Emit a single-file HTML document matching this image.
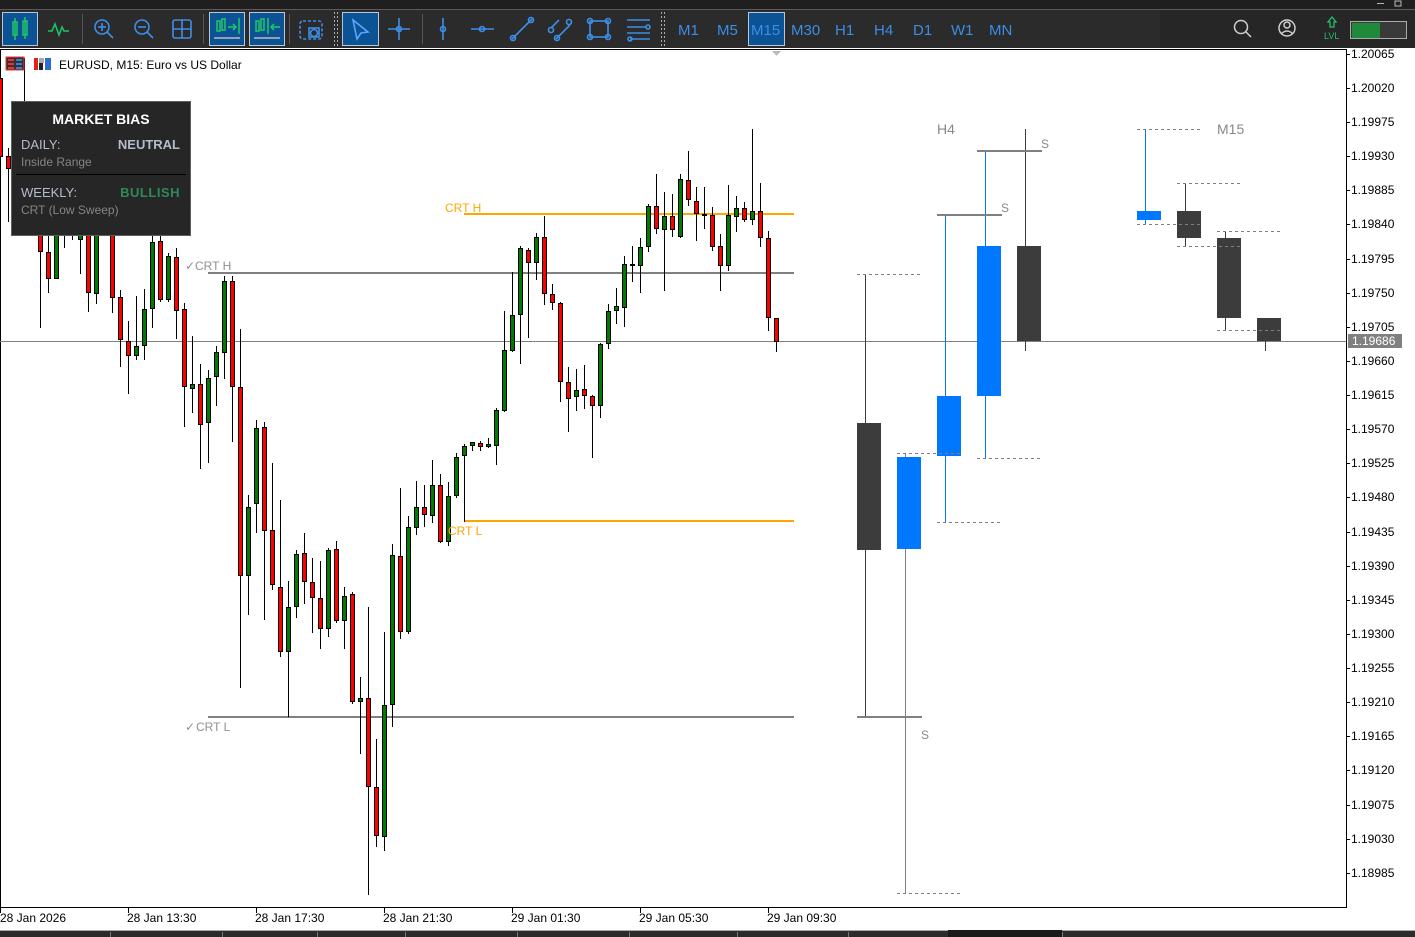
<!DOCTYPE html>
<html><head><meta charset="utf-8"><style>
*{margin:0;padding:0}
body{width:1415px;height:937px;overflow:hidden;background:#fff;font-family:"Liberation Sans",sans-serif;position:relative}
svg{position:absolute;left:0;top:0}
.tf{position:absolute;top:22px;font-size:15px;color:#3b8de8}
</style></head><body>
<svg width="1415" height="937" shape-rendering="crispEdges" font-family="Liberation Sans, sans-serif">
<rect x="0" y="0" width="1415" height="9" fill="#1f1f1f"/>
<rect x="0" y="9" width="1415" height="1" fill="#5a5a5a"/>
<rect x="0" y="10" width="1415" height="38" fill="#2b2b2b"/>
<rect x="1160" y="10" width="255" height="38" fill="#262626"/>
<g fill="#bbb"><rect x="1377" y="3" width="7" height="1"/><rect x="1395" y="1" width="6" height="5" fill="none" stroke="#bbb"/></g>
<g fill="#0b5394" stroke="#b8c7d8">
<rect x="2.5" y="12.5" width="35" height="33"/>
<rect x="209.5" y="12.5" width="35" height="33"/>
<rect x="249.5" y="12.5" width="35" height="33"/>
<rect x="342.5" y="12.5" width="36" height="33"/>
<rect x="748.5" y="12.5" width="36" height="33"/>
</g>
<g fill="#555"><rect x="82" y="14" width="1" height="30"/><rect x="203" y="14" width="1" height="30"/><rect x="289" y="14" width="1" height="30"/><rect x="422" y="14" width="1" height="30"/></g>
<g stroke="#aaa" stroke-dasharray="2,2"><line x1="334.5" y1="12" x2="334.5" y2="46"/><line x1="337.5" y1="12" x2="337.5" y2="46"/><line x1="661.5" y1="12" x2="661.5" y2="46"/><line x1="664.5" y1="12" x2="664.5" y2="46"/></g>
<g shape-rendering="auto" fill="none" stroke-width="1.6">
<g stroke="#1fc06a"><rect x="13" y="22" width="4" height="13"/><line x1="15" y1="18" x2="15" y2="40"/><rect x="23" y="21" width="4" height="14"/><line x1="25" y1="17" x2="25" y2="39"/></g>
<polyline stroke="#1fc06a" points="48,31 52,31 55,24 59,35 62,27 64,31 69,31"/>
<g stroke="#3d8ee8"><circle cx="102" cy="27" r="7"/><line x1="107" y1="32" x2="113" y2="38"/><line x1="98" y1="27" x2="106" y2="27"/><line x1="102" y1="23" x2="102" y2="31"/>
<circle cx="142" cy="27" r="7"/><line x1="147" y1="32" x2="153" y2="38"/><line x1="138" y1="27" x2="146" y2="27"/>
<rect x="173" y="20" width="18" height="18" rx="2"/><line x1="182" y1="20" x2="182" y2="38"/><line x1="173" y1="29" x2="191" y2="29"/>
<rect x="300" y="21" width="22" height="18" rx="3" stroke-dasharray="3,2"/><circle cx="314" cy="33" r="3.5"/><rect x="309" y="28" width="10" height="9"/>
<path d="M353 20 L368 32 L361 33 L357 39 Z" stroke="#5aa7ff"/>
<line x1="399" y1="18" x2="399" y2="40"/><line x1="388" y1="29" x2="410" y2="29"/><circle cx="399" cy="29" r="2.5"/>
<line x1="443" y1="18" x2="443" y2="40"/><circle cx="443" cy="29" r="2.5"/>
<line x1="471" y1="29" x2="494" y2="29"/><circle cx="482" cy="29" r="2.5"/>
<line x1="512" y1="39" x2="532" y2="19"/><circle cx="513" cy="38" r="2.5"/><circle cx="531" cy="20" r="2.5"/>
<line x1="551" y1="28" x2="559" y2="20"/><line x1="556" y1="39" x2="570" y2="25"/><circle cx="551" cy="30" r="2.5"/><circle cx="569" cy="22" r="2.5"/><circle cx="557" cy="38" r="2.5"/>
<rect x="590" y="21" width="18" height="16"/><circle cx="590" cy="21" r="2.5"/><circle cx="608" cy="21" r="2.5"/><circle cx="590" cy="37" r="2.5"/><circle cx="608" cy="37" r="2.5"/>
<line x1="627" y1="20" x2="650" y2="20"/><line x1="627" y1="27" x2="646" y2="27"/><line x1="627" y1="33" x2="650" y2="33"/><line x1="630" y1="39" x2="650" y2="39"/><circle cx="648" cy="27" r="2"/><circle cx="630" cy="39" r="2"/>
</g>
<g stroke="#1fc06a"><rect x="217" y="21" width="3" height="10"/><rect x="222" y="19" width="3" height="11"/><line x1="228" y1="27" x2="236" y2="27"/><path d="M233 24 L236 27 L233 30"/><line x1="239" y1="18" x2="239" y2="34"/><line x1="214" y1="38" x2="240" y2="38" stroke="#bbb"/>
<rect x="256" y="21" width="3" height="10"/><rect x="261" y="19" width="3" height="11"/><line x1="268" y1="18" x2="268" y2="34"/><line x1="271" y1="27" x2="280" y2="27"/><path d="M274 24 L271 27 L274 30"/><line x1="254" y1="38" x2="280" y2="38" stroke="#bbb"/></g>
<g stroke="#d0d0d0" stroke-width="1.5"><circle cx="1241" cy="27" r="6.5"/><line x1="1246" y1="32" x2="1251" y2="37"/><circle cx="1287" cy="28" r="8"/><circle cx="1287" cy="25" r="3"/><path d="M1281 34 Q1287 28 1293 34"/></g>
<path d="M1332 17 L1336 22 L1334 22 L1334 27 L1330 27 L1330 22 L1328 22 Z" stroke="#22c070" stroke-width="1.3"/>
</g>
<text x="1324" y="39" font-size="9" fill="#22c070">LVL</text>
<rect x="1350.5" y="21.5" width="56" height="17" fill="#3a3a3a" stroke="#aaa"/>
<rect x="1352" y="23" width="28" height="15" fill="#1e8a3a"/>
<rect x="0" y="48" width="1415" height="1" fill="#fff"/>
<rect x="0" y="49" width="1347" height="1" fill="#000"/>
<rect x="0" y="49" width="1" height="859" fill="#000"/>
<rect x="1346" y="49" width="1" height="859" fill="#000"/>
<rect x="0" y="907" width="1347" height="1" fill="#000"/>
<path d="M772 51 L781 51 L776.5 56 Z" fill="#bbb"/>
<rect x="0" y="341" width="1346" height="1" fill="#808080"/>
<rect x="208" y="272" width="586" height="2" fill="#808080"/>
<rect x="208" y="716" width="586" height="2" fill="#808080"/>
<rect x="464" y="213" width="330" height="2" fill="#FFA500"/>
<rect x="464" y="520" width="330" height="2" fill="#FFA500"/>
<g stroke="#000" shape-rendering="crispEdges">
<path stroke-width="1" d="
M0.5 50V160 M8.5 148V222 M24.5 58V230 M40.5 200V328 M48.5 220V293 M56.5 230V279 M64.5 190V248 M72.5 200V240 M80.5 200V274 M88.5 200V312 M96.5 200V304 M104.5 190V230 M112.5 200V313 M120.5 290V367 M128.5 321V394 M136.5 296V360 M144.5 289V360 M152.5 230V328 M160.5 236V302 M168.5 253V302 M176.5 248V339 M184.5 303V427 M192.5 336V413 M200.5 364V469 M208.5 370V463 M216.5 346V406 M224.5 276V379 M232.5 276V442 M240.5 329V688 M248.5 495V615 M256.5 420V533 M264.5 422V620 M272.5 463V590 M280.5 500V657 M288.5 581V717 M296.5 550V618 M304.5 533V604 M312.5 558V633 M320.5 561V649 M328.5 548V637 M336.5 541V623 M344.5 587V649 M352.5 592V704 M360.5 677V754 M368.5 607V895 M376.5 739V847 M384.5 632V851 M392.5 544V727 M400.5 488V639 M408.5 516V634 M416.5 481V535 M424.5 485V527 M432.5 460V523 M440.5 474V543 M448.5 482V546 M456.5 453V498 M464.5 444V522 M472.5 442V451 M480.5 441V451 M488.5 438V448 M496.5 408V465 M504.5 311V412 M512.5 272V352 M520.5 246V364 M528.5 248V338 M536.5 233V280 M544.5 216V305 M552.5 284V310 M560.5 302V402 M568.5 367V432 M576.5 369V411 M584.5 365V409 M592.5 395V458 M600.5 343V418 M608.5 304V349 M616.5 288V324 M624.5 256V327 M632.5 246V282 M640.5 238V293 M648.5 204V252 M656.5 174V234 M664.5 192V291 M672.5 194V237 M680.5 174V238 M688.5 151V206 M696.5 187V241 M704.5 187V229 M712.5 207V251 M720.5 234V291 M728.5 185V271 M736.5 196V232 M744.5 202V222 M752.5 129V225 M760.5 183V247 M768.5 231V331 M776.5 318V352"/>
</g>
<g stroke="#000" fill="#ff0000">
<rect x="-1.5" y="78.5" width="4" height="78"/>
<rect x="6.5" y="156.5" width="4" height="12"/>
<rect x="38.5" y="205.5" width="4" height="46"/>
<rect x="46.5" y="252.5" width="4" height="26"/>
<rect x="70.5" y="205.5" width="4" height="24"/>
<rect x="86.5" y="210.5" width="4" height="82"/>
<rect x="102.5" y="200.5" width="4" height="24"/>
<rect x="110.5" y="210.5" width="4" height="87"/>
<rect x="118.5" y="297.5" width="4" height="42"/>
<rect x="126.5" y="341.5" width="4" height="14"/>
<rect x="158.5" y="241.5" width="4" height="58"/>
<rect x="174.5" y="257.5" width="4" height="53"/>
<rect x="182.5" y="309.5" width="4" height="77"/>
<rect x="198.5" y="384.5" width="4" height="40"/>
<rect x="230.5" y="281.5" width="4" height="105"/>
<rect x="238.5" y="387.5" width="4" height="188"/>
<rect x="262.5" y="427.5" width="4" height="103"/>
<rect x="270.5" y="530.5" width="4" height="54"/>
<rect x="278.5" y="587.5" width="4" height="64"/>
<rect x="302.5" y="553.5" width="4" height="28"/>
<rect x="310.5" y="582.5" width="4" height="15"/>
<rect x="318.5" y="598.5" width="4" height="30"/>
<rect x="334.5" y="549.5" width="4" height="71"/>
<rect x="350.5" y="594.5" width="4" height="107"/>
<rect x="366.5" y="698.5" width="4" height="88"/>
<rect x="374.5" y="787.5" width="4" height="48"/>
<rect x="398.5" y="556.5" width="4" height="75"/>
<rect x="422.5" y="507.5" width="4" height="7"/>
<rect x="438.5" y="485.5" width="4" height="56"/>
<rect x="478.5" y="443.5" width="4" height="3"/>
<rect x="526.5" y="250.5" width="4" height="12"/>
<rect x="542.5" y="237.5" width="4" height="56"/>
<rect x="550.5" y="294.5" width="4" height="8"/>
<rect x="558.5" y="303.5" width="4" height="78"/>
<rect x="566.5" y="382.5" width="4" height="16"/>
<rect x="582.5" y="389.5" width="4" height="6"/>
<rect x="590.5" y="396.5" width="4" height="9"/>
<rect x="654.5" y="206.5" width="4" height="22"/>
<rect x="670.5" y="216.5" width="4" height="13"/>
<rect x="686.5" y="180.5" width="4" height="19"/>
<rect x="694.5" y="201.5" width="4" height="12"/>
<rect x="710.5" y="215.5" width="4" height="31"/>
<rect x="718.5" y="246.5" width="4" height="19"/>
<rect x="742.5" y="208.5" width="4" height="11"/>
<rect x="758.5" y="211.5" width="4" height="26"/>
<rect x="766.5" y="238.5" width="4" height="79"/>
<rect x="774.5" y="318.5" width="4" height="23"/>
</g>
<g stroke="#000" fill="#007a00">
<rect x="22.5" y="120.5" width="4" height="79"/>
<rect x="54.5" y="205.5" width="4" height="73"/>
<rect x="62.5" y="200.5" width="4" height="24"/>
<rect x="78.5" y="210.5" width="4" height="29"/>
<rect x="94.5" y="210.5" width="4" height="83"/>
<rect x="134.5" y="346.5" width="4" height="9"/>
<rect x="142.5" y="309.5" width="4" height="36"/>
<rect x="150.5" y="242.5" width="4" height="66"/>
<rect x="166.5" y="256.5" width="4" height="43"/>
<rect x="190.5" y="384.5" width="4" height="4"/>
<rect x="206.5" y="378.5" width="4" height="44"/>
<rect x="214.5" y="352.5" width="4" height="24"/>
<rect x="222.5" y="281.5" width="4" height="71"/>
<rect x="246.5" y="507.5" width="4" height="68"/>
<rect x="254.5" y="428.5" width="4" height="75"/>
<rect x="286.5" y="607.5" width="4" height="44"/>
<rect x="294.5" y="554.5" width="4" height="52"/>
<rect x="326.5" y="550.5" width="4" height="78"/>
<rect x="342.5" y="596.5" width="4" height="24"/>
<rect x="358.5" y="698.5" width="4" height="3"/>
<rect x="382.5" y="705.5" width="4" height="131"/>
<rect x="390.5" y="555.5" width="4" height="149"/>
<rect x="406.5" y="527.5" width="4" height="104"/>
<rect x="414.5" y="507.5" width="4" height="20"/>
<rect x="430.5" y="485.5" width="4" height="30"/>
<rect x="446.5" y="496.5" width="4" height="45"/>
<rect x="454.5" y="457.5" width="4" height="38"/>
<rect x="462.5" y="446.5" width="4" height="9"/>
<rect x="470.5" y="442.5" width="4" height="3"/>
<rect x="486.5" y="444.5" width="4" height="2"/>
<rect x="494.5" y="410.5" width="4" height="35"/>
<rect x="502.5" y="350.5" width="4" height="60"/>
<rect x="510.5" y="315.5" width="4" height="35"/>
<rect x="518.5" y="248.5" width="4" height="66"/>
<rect x="534.5" y="237.5" width="4" height="25"/>
<rect x="574.5" y="390.5" width="4" height="6"/>
<rect x="598.5" y="344.5" width="4" height="61"/>
<rect x="606.5" y="311.5" width="4" height="32"/>
<rect x="614.5" y="306.5" width="4" height="4"/>
<rect x="622.5" y="264.5" width="4" height="43"/>
<rect x="630.5" y="264.5" width="4" height="1"/>
<rect x="638.5" y="247.5" width="4" height="18"/>
<rect x="646.5" y="206.5" width="4" height="40"/>
<rect x="662.5" y="216.5" width="4" height="13"/>
<rect x="678.5" y="179.5" width="4" height="57"/>
<rect x="702.5" y="214.5" width="4" height="1"/>
<rect x="726.5" y="215.5" width="4" height="50"/>
<rect x="734.5" y="208.5" width="4" height="8"/>
<rect x="750.5" y="211.5" width="4" height="8"/>
</g>
<g font-size="12">
<text x="185" y="270" fill="#909090">✓</text><text x="195" y="270" fill="#909090">CRT H</text>
<text x="185" y="731" fill="#909090">✓</text><text x="196" y="731" fill="#909090">CRT L</text>
<text x="445" y="212" fill="#FFA500">CRT H</text>
<text x="448" y="535" fill="#FFA500">CRT L</text>
</g>
<g fill="#3c3c3c" stroke="none">
<rect x="865" y="274" width="1" height="443"/><rect x="857" y="423" width="24" height="127"/>
<rect x="1025" y="129" width="1" height="222"/><rect x="1017" y="246" width="24" height="95"/>
<rect x="1185" y="183" width="1" height="63"/><rect x="1177" y="211" width="24" height="27"/>
<rect x="1225" y="231" width="1" height="99"/><rect x="1217" y="238" width="24" height="80"/>
<rect x="1265" y="318" width="1" height="33"/><rect x="1257" y="318" width="24" height="23"/>
</g>
<g fill="#0077ff" stroke="none">
<rect x="905" y="453" width="1" height="440" fill="#808080"/><rect x="897" y="457" width="24" height="92"/>
<rect x="945" y="215" width="1" height="307"/><rect x="937" y="396" width="24" height="60"/>
<rect x="985" y="151" width="1" height="307"/><rect x="977" y="246" width="24" height="150"/>
<rect x="1145" y="129" width="1" height="95"/><rect x="1137" y="211" width="24" height="9"/>
</g>
<g fill="#808080"><rect x="857" y="716" width="65" height="2"/><rect x="937" y="214" width="65" height="2"/><rect x="977" y="150" width="65" height="2"/></g>
<g stroke="#808080" stroke-dasharray="3,3">
<line x1="857" y1="274.5" x2="920" y2="274.5"/><line x1="897" y1="453.5" x2="960" y2="453.5"/><line x1="897" y1="893.5" x2="960" y2="893.5"/>
<line x1="937" y1="522.5" x2="1000" y2="522.5"/><line x1="977" y1="458.5" x2="1040" y2="458.5"/>
<line x1="1137" y1="129.5" x2="1200" y2="129.5"/><line x1="1137" y1="224.5" x2="1200" y2="224.5"/>
<line x1="1177" y1="183.5" x2="1240" y2="183.5"/><line x1="1177" y1="246.5" x2="1240" y2="246.5"/>
<line x1="1217" y1="231.5" x2="1280" y2="231.5"/><line x1="1217" y1="330.5" x2="1280" y2="330.5"/>
</g>
<g font-size="14" fill="#888"><text x="937" y="134">H4</text><text x="1217" y="134">M15</text></g>
<g font-size="12" fill="#888"><text x="1041" y="148">S</text><text x="1001" y="212">S</text><text x="921" y="739">S</text></g>
<g font-size="12" fill="#000">
<text x="1351" y="58">1.20065</text><text x="1351" y="92">1.20020</text><text x="1351" y="126">1.19975</text><text x="1351" y="160">1.19930</text><text x="1351" y="194">1.19885</text><text x="1351" y="228">1.19840</text><text x="1351" y="263">1.19795</text><text x="1351" y="297">1.19750</text><text x="1351" y="331">1.19705</text><text x="1351" y="365">1.19660</text><text x="1351" y="399">1.19615</text><text x="1351" y="433">1.19570</text><text x="1351" y="467">1.19525</text><text x="1351" y="501">1.19480</text><text x="1351" y="536">1.19435</text><text x="1351" y="570">1.19390</text><text x="1351" y="604">1.19345</text><text x="1351" y="638">1.19300</text><text x="1351" y="672">1.19255</text><text x="1351" y="706">1.19210</text><text x="1351" y="740">1.19165</text><text x="1351" y="774">1.19120</text><text x="1351" y="809">1.19075</text><text x="1351" y="843">1.19030</text><text x="1351" y="877">1.18985</text>
</g>
<g fill="#000"><rect x="1347" y="54" width="3" height="1"/><rect x="1347" y="88" width="3" height="1"/><rect x="1347" y="122" width="3" height="1"/><rect x="1347" y="156" width="3" height="1"/><rect x="1347" y="190" width="3" height="1"/><rect x="1347" y="224" width="3" height="1"/><rect x="1347" y="259" width="3" height="1"/><rect x="1347" y="293" width="3" height="1"/><rect x="1347" y="327" width="3" height="1"/><rect x="1347" y="361" width="3" height="1"/><rect x="1347" y="395" width="3" height="1"/><rect x="1347" y="429" width="3" height="1"/><rect x="1347" y="463" width="3" height="1"/><rect x="1347" y="497" width="3" height="1"/><rect x="1347" y="532" width="3" height="1"/><rect x="1347" y="566" width="3" height="1"/><rect x="1347" y="600" width="3" height="1"/><rect x="1347" y="634" width="3" height="1"/><rect x="1347" y="668" width="3" height="1"/><rect x="1347" y="702" width="3" height="1"/><rect x="1347" y="736" width="3" height="1"/><rect x="1347" y="770" width="3" height="1"/><rect x="1347" y="805" width="3" height="1"/><rect x="1347" y="839" width="3" height="1"/><rect x="1347" y="873" width="3" height="1"/></g>
<rect x="1348" y="334" width="54" height="14" fill="#808080"/>
<text x="1352" y="345" font-size="12" fill="#fff">1.19686</text>
<g fill="#000"><rect x="0" y="908" width="1" height="5"/><rect x="128" y="908" width="1" height="5"/><rect x="256" y="908" width="1" height="5"/><rect x="384" y="908" width="1" height="5"/><rect x="512" y="908" width="1" height="5"/><rect x="640" y="908" width="1" height="5"/><rect x="768" y="908" width="1" height="5"/></g>
<g font-size="12" fill="#000"><text x="0" y="922">28 Jan 2026</text><text x="127" y="922">28 Jan 13:30</text><text x="255" y="922">28 Jan 17:30</text><text x="383" y="922">28 Jan 21:30</text><text x="511" y="922">29 Jan 01:30</text><text x="639" y="922">29 Jan 05:30</text><text x="767" y="922">29 Jan 09:30</text></g>
<rect x="0" y="930" width="1415" height="1" fill="#aaa"/>
<rect x="0" y="931" width="1415" height="6" fill="#2b2b2b"/>
<rect x="948" y="930" width="114" height="7" fill="#1a1a1a"/>
<g fill="#777"><rect x="110" y="932" width="1" height="5"/><rect x="222" y="932" width="1" height="5"/><rect x="317" y="932" width="1" height="5"/><rect x="405" y="932" width="1" height="5"/><rect x="517" y="932" width="1" height="5"/><rect x="629" y="932" width="1" height="5"/><rect x="737" y="932" width="1" height="5"/><rect x="848" y="932" width="1" height="5"/><rect x="1062" y="932" width="1" height="5"/></g>
<rect x="6" y="57" width="18" height="13" fill="#333" stroke="#e33"/>
<g fill="#e33"><rect x="8" y="59" width="6" height="2"/><rect x="8" y="63" width="6" height="2"/><rect x="8" y="67" width="6" height="2"/></g>
<g fill="#3a7de0"><rect x="16" y="59" width="6" height="2"/><rect x="16" y="63" width="6" height="2"/><rect x="16" y="67" width="6" height="2"/></g>
<rect x="34" y="58" width="4" height="12" fill="#d22"/><rect x="39" y="58" width="5" height="5" fill="#aaa"/><rect x="39" y="63" width="4" height="7" fill="#222"/><rect x="45" y="58" width="6" height="12" fill="#2a6fd0"/>
<text x="59" y="69" font-size="12" fill="#000">EURUSD, M15:  Euro vs US Dollar</text>
<rect x="11.5" y="101.5" width="179" height="134" fill="#262626" stroke="#5e5e5e"/>
<text x="101" y="124" font-size="14" font-weight="bold" fill="#fff" text-anchor="middle">MARKET BIAS</text>
<text x="21" y="149" font-size="13" fill="#b4bccc">DAILY:</text>
<text x="180" y="149" font-size="13" font-weight="bold" fill="#b4bccc" text-anchor="end">NEUTRAL</text>
<text x="21" y="166" font-size="12" fill="#858585">Inside Range</text>
<rect x="16" y="174" width="170" height="1" fill="#000"/>
<text x="21" y="197" font-size="13" fill="#b4bccc">WEEKLY:</text>
<text x="180" y="197" font-size="13" font-weight="bold" fill="#2e8b57" text-anchor="end" letter-spacing="0.5">BULLISH</text>
<text x="21" y="214" font-size="12" fill="#858585">CRT (Low Sweep)</text>
</svg>
<div class="tf" style="left:678px">M1</div>
<div class="tf" style="left:717px">M5</div>
<div class="tf" style="left:751px">M15</div>
<div class="tf" style="left:791px">M30</div>
<div class="tf" style="left:835px">H1</div>
<div class="tf" style="left:874px">H4</div>
<div class="tf" style="left:913px">D1</div>
<div class="tf" style="left:951px">W1</div>
<div class="tf" style="left:989px">MN</div>
</body></html>
